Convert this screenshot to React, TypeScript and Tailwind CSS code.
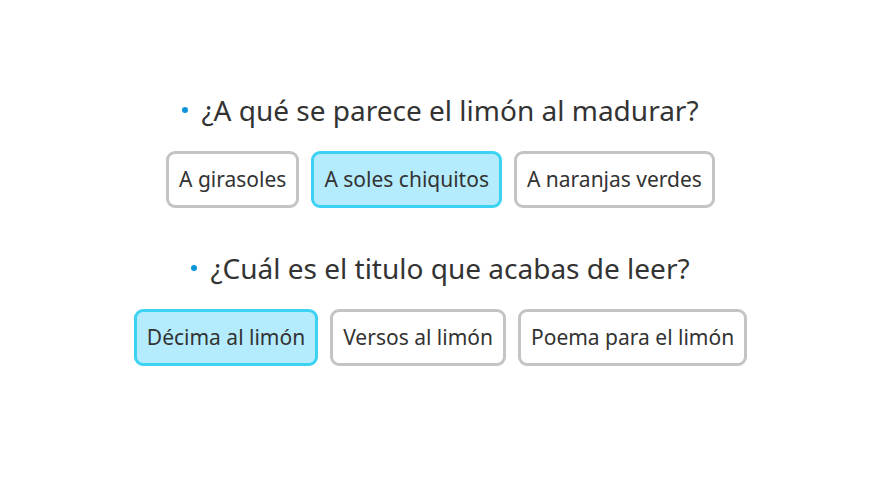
const questions = [
  {
    title: '¿A qué se parece el limón al madurar?',
    options: ['A girasoles', 'A soles chiquitos', 'A naranjas verdes'],
    selected: 1,
  },
  {
    title: '¿Cuál es el titulo que acabas de leer?',
    options: ['Décima al limón', 'Versos al limón', 'Poema para el limón'],
    selected: 0,
  },
]

export default function App() {
  return (
    <div className="w-[881px] h-[490px] bg-white pt-[92px] font-['Noto_Sans',sans-serif] text-[#333]">
      {questions.map((q, qi) => (
        <div key={q.title} className={qi > 0 ? 'mt-[42px]' : ''}>
          <div className="flex items-center justify-center gap-[13px] h-[36px] text-[28px] leading-[36px]">
            <span className="w-[6px] h-[6px] rounded-full bg-[#0a95d9]" />
            <span>{q.title}</span>
          </div>
          <div className="flex justify-center gap-3 mt-[23px]">
            {q.options.map((opt, i) => (
              <button
                key={opt}
                className={
                  'h-[57px] px-[10px] rounded-[9px] border-[3px] text-[21px] text-[#333] ' +
                  (i === q.selected
                    ? 'border-[#3cd2f4] bg-[#b4ecfd]'
                    : 'border-[#c4c4c4] bg-white')
                }
              >
                {opt}
              </button>
            ))}
          </div>
        </div>
      ))}
    </div>
  )
}
